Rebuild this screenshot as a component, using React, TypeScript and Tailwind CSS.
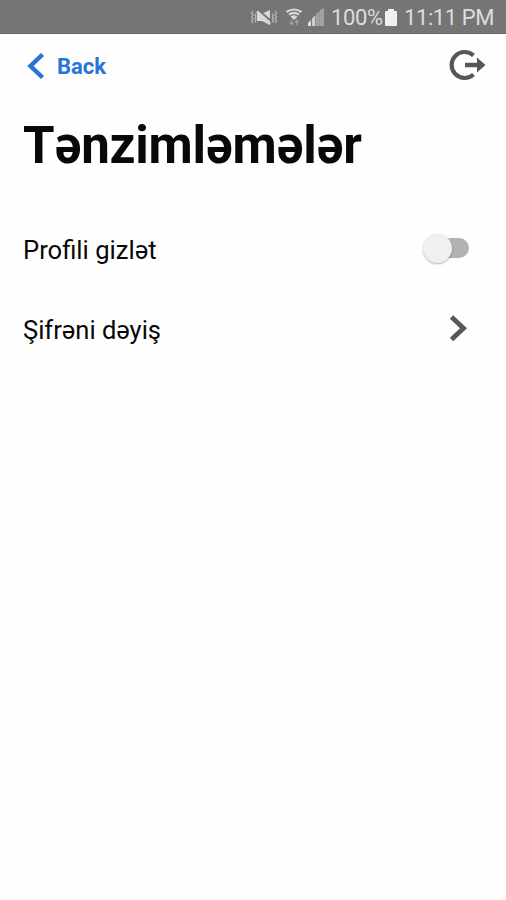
import React, { useState } from "react";

function MutedIcon() {
  return (
    <svg width="28" height="20" viewBox="0 0 28 20" fill="none" stroke="#d8d8d8">
      <path d="M3 3L1.500 5 3 7 1.500 9 3 11l-1.500 2L3 15M6 5.500L5 7l1 1.500L5 10l1 1.500L5 13l1 1.500M25 3l1.500 2L25 7l1.500 2-1.500 2 1.500 2-1.500 2M22.300 5.500l1 1.500-1 1.500 1 1.500-1 1.500 1 1.500-1 1.500" strokeWidth="1.200" opacity="0.7" />
      <path d="M7 5.500h5l8-3.500v15L12 13H7z" fill="#d8d8d8" stroke="none" />
      <path d="M9.500 3L20.500 12.500" stroke="#757575" strokeWidth="2" />
      <path d="M7 3.500L20 16" strokeWidth="2.600" />
    </svg>
  );
}

function WifiIcon() {
  return (
    <svg width="18" height="20" viewBox="0 0 18 20" fill="none" stroke="#d8d8d8">
      <path d="M1.500 4Q9-1 16.500 4M4 6.700Q9 3 14 6.700" strokeWidth="2.200" />
      <path d="M5.500 8.700Q9 6 12.500 8.700L9 12z" fill="#d8d8d8" stroke="none" />
      <path d="M6.500 12v4.500M4.700 14.700l1.800 2 1.800-2M11.800 17v-4.500M10 14.300l1.800-2 1.800 2" strokeWidth="1.100" opacity="0.5" />
    </svg>
  );
}

function SignalIcon() {
  return (
    <svg width="17" height="19" viewBox="0 0 17 19">
      <path d="M0 18v-3l3-3v6z" fill="#e0e0e0" />
      <path d="M4 18v-7.500l3.300-3V18z" fill="#cecece" />
      <path d="M8 18V6l3.700-3v15zM12 18V2L16 0v18z" fill="#a2a2a2" />
    </svg>
  );
}

function StatusBar() {
  return (
    <header className="flex h-[34px] items-center border-b border-[#666666] bg-[#757575] pt-[2px] pl-[250px] text-[22px] leading-[32px] text-[#dddddd]">
      <MutedIcon />
      <span className="ml-[7px]"><WifiIcon /></span>
      <span className="ml-[5px]"><SignalIcon /></span>
      <span className="ml-[6px] w-[54px] whitespace-nowrap tracking-[-0.35px]">100%</span>
      <svg width="12" height="18" viewBox="0 0 12 18" fill="#f0f0f0">
        <path d="M3 0h6v2h2q1 0 1 1v13q0 1-1 1H1q-1 0-1-1V3q0-1 1-1h2z" />
      </svg>
      <span className="ml-[7px] whitespace-nowrap tracking-[-0.4px]">11:11 PM</span>
    </header>
  );
}

export default function App() {
  const [hidden, setHidden] = useState(false);
  return (
    <div className="h-[900px] w-[506px] overflow-hidden bg-[#fefefe] font-['Roboto',sans-serif] text-[#080808]">
      <StatusBar />
      <nav className="flex h-[64px] items-center justify-between pr-[19px] pl-[27px]">
        <button className="flex items-center text-[#2674d9]">
          <svg width="18" height="28" viewBox="0 0 18 28" fill="none" stroke="currentColor" strokeWidth="4.500">
            <path d="M15.500 2.500L3.500 14l12 11.500" />
          </svg>
          <span className="ml-3 pt-[2px] text-[22px] leading-[30px] font-bold">Back</span>
        </button>
        <button aria-label="Log out" className="-mt-[2px]">
          <svg width="38" height="32" viewBox="0 0 38 32" fill="none">
            <path d="M24.500 6.500A13 13 0 1 0 24.500 25.500" stroke="#575757" strokeWidth="4.200" />
            <path d="M16 13.700h12V8.500l8.500 7.500-8.500 7.500v-5.200H16z" fill="#575757" />
          </svg>
        </button>
      </nav>
      <main className="pl-[23px]">
        <h1 className="h-[110px] pt-[16px] text-[51px] leading-[64px] font-bold tracking-[-0.22px] whitespace-nowrap">Tənzimləmələr</h1>
        <div className="flex h-[80px] items-center justify-between pr-[36px]">
          <span className="pt-[4px] text-[25.6px] leading-[38px] whitespace-nowrap">Profili gizlət</span>
          <button
            role="switch"
            aria-checked={hidden}
            aria-label="Profili gizlət"
            onClick={() => setHidden(!hidden)}
            className="flex h-[30px] w-[47px] items-center"
          >
            <span className="z-10 h-[29px] w-[29px] shrink-0 rounded-full bg-[#f0f0f0] shadow-[0_1px_2px_rgba(0,0,0,0.3)]" />
            <span className="-ml-[17px] h-[20px] w-[34px] shrink-0 rounded-full bg-[#b2b2b2]" />
          </button>
        </div>
        <button className="flex h-[80px] w-full items-center justify-between pr-[38px]">
          <span className="pt-[4px] text-[25.5px] leading-[38px] whitespace-nowrap">Şifrəni dəyiş</span>
          <svg width="20" height="28" viewBox="0 0 20 28" fill="none" stroke="#575757" strokeWidth="4.800">
            <path d="M3.500 3l12 11.300L3.500 25.600" />
          </svg>
        </button>
      </main>
    </div>
  );
}
